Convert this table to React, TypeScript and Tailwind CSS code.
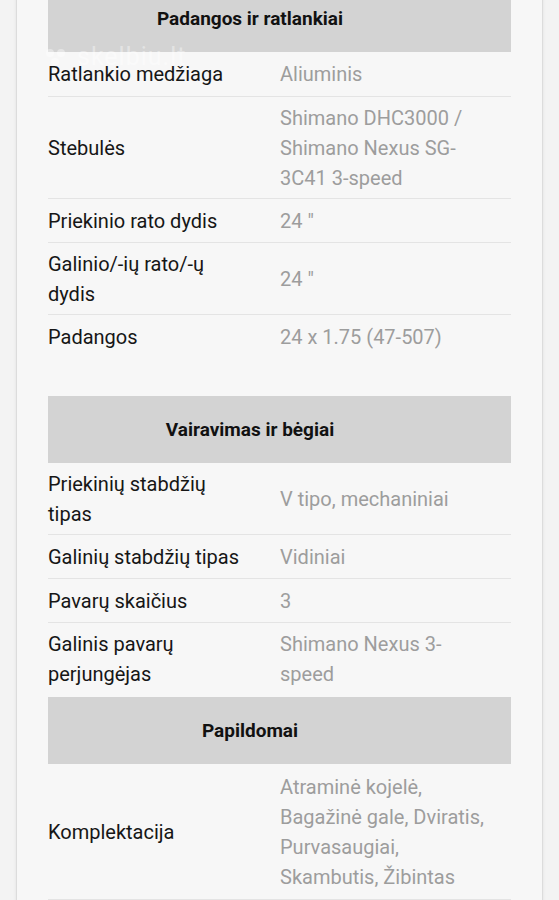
import React from 'react';

interface Spec {
  label: string[];
  value: string[];
}

interface Section {
  title: string;
  rows: Spec[];
}

const sections: Section[] = [
  {
    title: 'Padangos ir ratlankiai',
    rows: [
      { label: ['Ratlankio medžiaga'], value: ['Aliuminis'] },
      { label: ['Stebulės'], value: ['Shimano DHC3000 /', 'Shimano Nexus SG-', '3C41 3-speed'] },
      { label: ['Priekinio rato dydis'], value: ['24 "'] },
      { label: ['Galinio/-ių rato/-ų', 'dydis'], value: ['24 "'] },
      { label: ['Padangos'], value: ['24 x 1.75 (47-507)'] },
    ],
  },
  {
    title: 'Vairavimas ir bėgiai',
    rows: [
      { label: ['Priekinių stabdžių', 'tipas'], value: ['V tipo, mechaniniai'] },
      { label: ['Galinių stabdžių tipas'], value: ['Vidiniai'] },
      { label: ['Pavarų skaičius'], value: ['3'] },
      { label: ['Galinis pavarų', 'perjungėjas'], value: ['Shimano Nexus 3-', 'speed'] },
    ],
  },
  {
    title: 'Papildomai',
    rows: [
      {
        label: ['Komplektacija'],
        value: ['Atraminė kojelė,', 'Bagažinė gale, Dviratis,', 'Purvasaugiai,', 'Skambutis, Žibintas'],
      },
    ],
  },
];

function SpecRow({ spec, first, last }: { spec: Spec; first: boolean; last: boolean }) {
  return (
    <div
      className={`flex min-h-[44px] items-center py-[5.5px] ${first ? '' : 'border-t border-[#e4e4e4]'} ${last ? 'border-b border-[#e4e4e4] pb-[7px] pt-[8px]' : ''}`}
    >
      <div className="w-[232px] shrink-0 text-[#161616]">
        {spec.label.map((l) => (
          <div key={l} className="whitespace-nowrap">{l}</div>
        ))}
      </div>
      <div className="flex-1 text-[#9d9d9d]">
        {spec.value.map((v) => (
          <div key={v} className="whitespace-nowrap">{v}</div>
        ))}
      </div>
    </div>
  );
}

export default function App() {
  return (
    <div
      className="relative h-[900px] overflow-hidden bg-[#f3f3f3] px-4 text-[20px] leading-[30px]"
      style={{ fontFamily: 'Roboto, "Noto Sans", sans-serif' }}
    >
      <div className="-mt-[15px] min-h-[960px] border-x border-[#dcdcdc] bg-[#f7f7f7] px-[31px] shadow-[0_0_3px_rgba(0,0,0,0.08)]">
        {sections.map((section, si) => (
          <div key={section.title} className={si === 1 ? 'mt-[38px]' : si === 2 ? 'mt-[3px]' : ''}>
            <div className="flex h-[67px] items-center justify-center bg-[#d3d3d3] pr-[59px] text-[19px] font-bold text-[#111]">
              {section.title}
            </div>
            {section.rows.map((spec, ri) => (
              <SpecRow
                key={spec.label.join(' ')}
                spec={spec}
                first={ri === 0}
                last={si === 2 && ri === section.rows.length - 1}
              />
            ))}
          </div>
        ))}
      </div>
      <div className="pointer-events-none absolute left-[43px] top-[44px] flex items-center gap-[6px] text-white/40">
        <svg width="28" height="22" viewBox="0 0 28 22" fill="currentColor">
          <circle cx="7" cy="7" r="4" />
          <circle cx="18" cy="7" r="4" />
          <circle cx="12" cy="16" r="4" />
        </svg>
        <span className="text-[25px] leading-[26px] tracking-[1px]">skelbiu.lt</span>
      </div>
    </div>
  );
}
